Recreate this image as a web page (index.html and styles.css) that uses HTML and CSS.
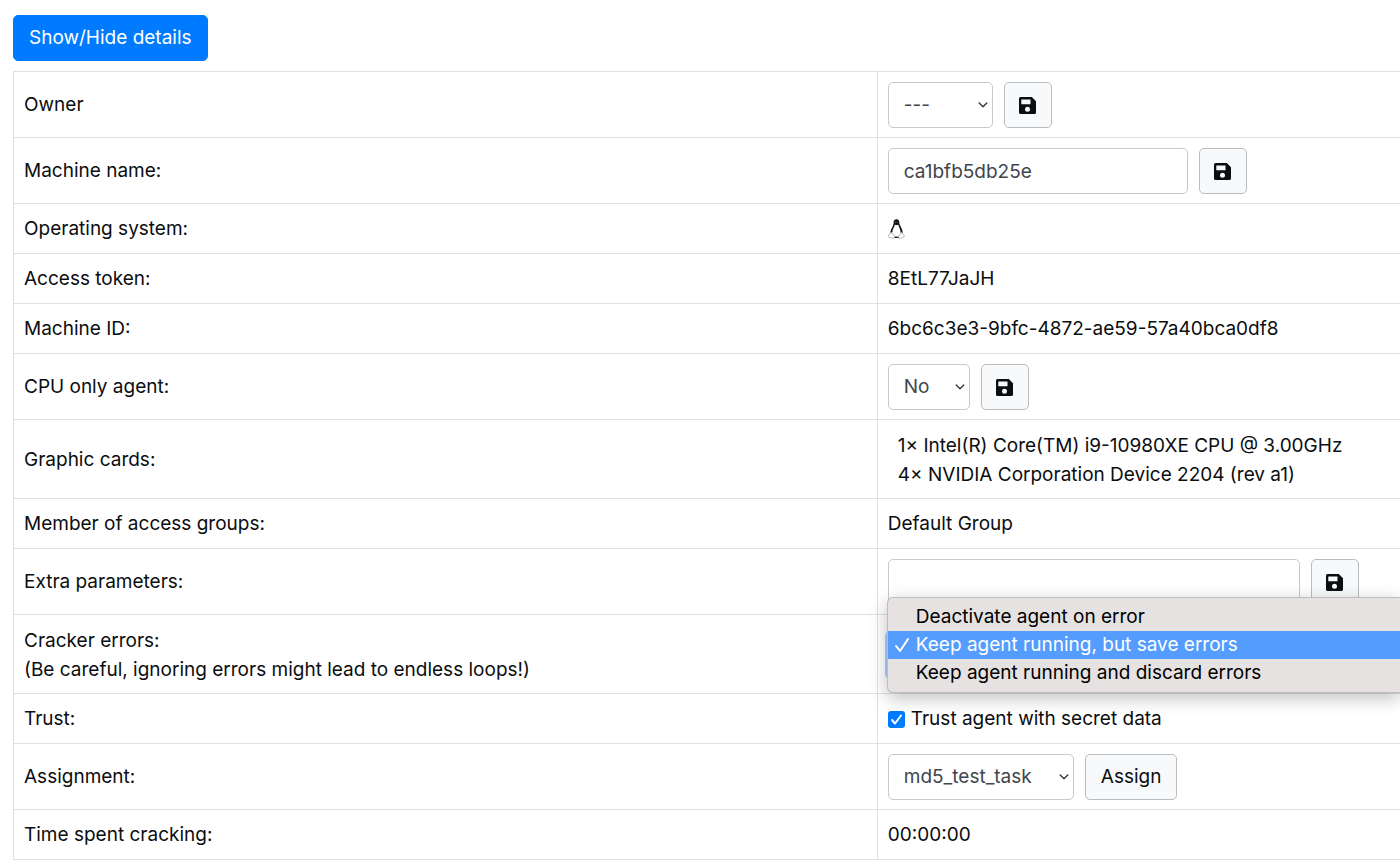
FILE: index.html
```html
<!DOCTYPE html>
<html lang="en">
<head>
<meta charset="utf-8">
<title>Agent details</title>
<link rel="stylesheet" href="styles.css">
</head>
<body>
<svg class="sprite" aria-hidden="true">
  <symbol id="save" viewBox="0 0 17 17">
    <path fill="currentColor" fill-rule="evenodd" d="M1.500 0H12.800L17 4.200V15.500Q17 17 15.500 17H1.500Q0 17 0 15.500V1.500Q0 0 1.500 0ZM2.300 2.600V7.200H11.500V2.600ZM8.500 9.800A2.500 2.500 0 1 0 8.500 14.800A2.500 2.500 0 1 0 8.500 9.800Z"/>
  </symbol>
  <symbol id="chevron" viewBox="0 0 10 6">
    <path fill="none" stroke="currentColor" stroke-width="1.4" stroke-linecap="round" stroke-linejoin="round" d="M1.200 1L5 4.800L8.800 1"/>
  </symbol>
</svg>
<main class="page">
  <button type="button" class="btn btn-primary">Show/Hide details</button>
  <table class="details">
    <colgroup><col class="col-name"><col></colgroup>
    <tbody>
      <tr>
        <td><label for="owner">Owner</label></td>
        <td><form class="controls">
          <span class="select select-owner"><select id="owner" class="field"><option>---</option></select><svg class="chevron"><use href="#chevron"/></svg></span>
          <button type="button" class="btn btn-save" aria-label="Save owner"><svg class="icon"><use href="#save"/></svg></button>
        </form></td>
      </tr>
      <tr>
        <td><label for="machine">Machine name:</label></td>
        <td><form class="controls">
          <input id="machine" class="field input-name" type="text" value="ca1bfb5db25e">
          <button type="button" class="btn btn-save" aria-label="Save machine name"><svg class="icon"><use href="#save"/></svg></button>
        </form></td>
      </tr>
      <tr>
        <td>Operating system:</td>
        <td><div class="os"><svg class="tux" viewBox="0 0 17 20" role="img" aria-label="Linux">
          <path fill="#fff" stroke="#333" stroke-width="0.8" d="M6 5C5.500 8 3 10 3 14L5 18H12L14 14C14 10 11.500 8 11 5Z"/>
          <path fill="#111" d="M5.600 4.500C5.300 1.500 6.700 0.300 8.500 0.300C10.500 0.300 11.600 1.700 11.400 4.800C11.500 7.300 14.900 9.300 14.500 14L12.500 13.500C13 10.500 10.700 8.500 10.200 5.500L8.500 6.200L6.900 5.500C6.500 8.300 4.200 10 4.300 13.500L2.600 14C2.400 10 5.800 7.800 5.600 4.500Z"/>
          <path fill="#fff" stroke="#999" stroke-width="0.7" d="M3.300 13.200L6.700 17.400C6.800 19.500 4.800 19.800 3.500 19L0.800 18.500C0.200 17.500 0.800 16.800 0.700 15.600C1.800 15.500 2.500 14.500 3.300 13.200ZM13.600 13.200L10.500 17.500C10.300 19.500 12.300 19.900 13.500 19L16 17.800C16.800 17 15.800 16.300 15.700 15.400C14.800 15.300 14.200 14.500 13.600 13.200Z"/>
          <path stroke="#222" d="M6.500 18.500H10.500"/>
          <path stroke="#ddd" stroke-width="0.7" d="M7.300 3.200H8M9.100 3.200H9.800"/>
        </svg></div></td>
      </tr>
      <tr><td>Access token:</td><td>8EtL77JaJH</td></tr>
      <tr><td>Machine ID:</td><td>6bc6c3e3-9bfc-4872-ae59-57a40bca0df8</td></tr>
      <tr>
        <td><label for="cpu">CPU only agent:</label></td>
        <td><form class="controls">
          <span class="select select-cpu"><select id="cpu" class="field"><option>No</option><option>Yes</option></select><svg class="chevron"><use href="#chevron"/></svg></span>
          <button type="button" class="btn btn-save" aria-label="Save CPU setting"><svg class="icon"><use href="#save"/></svg></button>
        </form></td>
      </tr>
      <tr>
        <td>Graphic cards:</td>
        <td><div class="lines cards">1× Intel(R) Core(TM) i9-10980XE CPU @ 3.00GHz<br>4× NVIDIA Corporation Device 2204 (rev a1)</div></td>
      </tr>
      <tr><td>Member of access groups:</td><td>Default Group</td></tr>
      <tr>
        <td><label for="extra">Extra parameters:</label></td>
        <td><form class="controls">
          <input id="extra" class="field input-extra" type="text">
          <button type="button" class="btn btn-save" aria-label="Save extra parameters"><svg class="icon"><use href="#save"/></svg></button>
        </form></td>
      </tr>
      <tr>
        <td><label class="lines" for="errors">Cracker errors:<br>(Be careful, ignoring errors might lead to endless loops!)</label></td>
        <td class="errors-cell">
          <div class="controls"><select id="errors" class="field select-errors"><option>Keep agent running, but save errors</option></select></div>
          <ul class="menu" role="listbox" aria-label="Cracker errors">
            <li class="menu-item" role="option">Deactivate agent on error</li>
            <li class="menu-item selected" role="option" aria-selected="true"><svg class="tick" viewBox="0 0 16 16"><path fill="none" stroke="currentColor" stroke-width="2" stroke-linecap="round" stroke-linejoin="round" d="M2 9L6 14L14 2"/></svg>Keep agent running, but save errors</li>
            <li class="menu-item" role="option">Keep agent running and discard errors</li>
          </ul>
        </td>
      </tr>
      <tr>
        <td>Trust:</td>
        <td><label class="trust"><input type="checkbox" class="check" checked><svg class="check-mark" viewBox="0 0 17 17"><path fill="none" stroke="currentColor" stroke-width="2" stroke-linecap="round" stroke-linejoin="round" d="M4 9L7 12.500L13 4.500"/></svg>Trust agent with secret data</label></td>
      </tr>
      <tr>
        <td><label for="task">Assignment:</label></td>
        <td><form class="controls">
          <span class="select select-task"><select id="task" class="field"><option>md5_test_task</option></select><svg class="chevron"><use href="#chevron"/></svg></span>
          <button type="button" class="btn">Assign</button>
        </form></td>
      </tr>
      <tr><td>Time spent cracking:</td><td>00:00:00</td></tr>
    </tbody>
  </table>
</main>
</body>
</html>
```

FILE: styles.css
```css
* { box-sizing: border-box; }

body {
  margin: 0;
  background: #fff;
  color: #0b0d0f;
  font-family: Inter, "Liberation Sans", sans-serif;
  font-size: 19px;
  line-height: 30px;
}

.sprite { display: none; }

.page {
  display: flex;
  flex-direction: column;
  align-items: flex-start;
  gap: 10px;
  padding: 15px 0 0 13px;
  overflow-x: hidden;
}

.btn {
  height: 46px;
  padding: 0 15px;
  border: 1px solid #b9bcbf;
  border-radius: 5px;
  background: #f8f9fa;
  color: #0b0d0f;
  font: inherit;
}

.btn-primary {
  border-color: #007bff;
  background: #007bff;
  color: #fff;
}

.btn-save {
  display: grid;
  place-items: center;
  width: 48px;
  padding: 0;
}

.icon {
  width: 17px;
  height: 17px;
}

.details {
  width: 100%;
  border-collapse: collapse;
  table-layout: fixed;
}

.col-name { width: 62.3%; }

.details td {
  padding: 10px 10px 9px;
  border: 1px solid #dee0e2;
  border-right: 0;
  vertical-align: middle;
  white-space: nowrap;
}

.lines {
  display: block;
  padding-top: 1px;
  line-height: 29px;
}

.controls {
  display: flex;
  gap: 11px;
  margin: 0;
}

.field {
  height: 46px;
  padding: 0 15px;
  border: 1px solid #c6cacd;
  border-radius: 5px;
  background: #fff;
  color: #3f464d;
  font: inherit;
  appearance: none;
}

.select {
  display: grid;
  align-items: center;
}

.select .field {
  grid-area: 1 / 1;
  width: 100%;
}

.chevron {
  grid-area: 1 / 1;
  justify-self: end;
  width: 10px;
  height: 6px;
  margin-right: 5px;
  color: #343a40;
  pointer-events: none;
}

.select-owner { width: 105px; }
.select-cpu { width: 82px; }
.select-task { width: 186px; }
.input-name { width: 300px; }
.input-extra { width: 412px; }

.os {
  display: flex;
  align-items: center;
  height: 30px;
}

.tux {
  width: 17px;
  height: 20px;
}

.cards { padding-left: 10px; }

.errors-cell { position: relative; }

.select-errors {
  width: 100%;
  border-color: #80bdff;
  box-shadow: 0 0 0 3px #a9d0fb;
}

.menu {
  position: absolute;
  top: -18px;
  left: 9px;
  right: 0;
  margin: 0;
  padding: 5px 0;
  border: 1px solid #bfbcbc;
  border-right: 0;
  border-radius: 6px 0 0 6px;
  background: #e6e2e2;
  box-shadow: 0 5px 18px rgba(0, 0, 0, 0.25);
  color: #000;
  line-height: 28px;
  list-style: none;
}

.menu-item {
  display: flex;
  align-items: center;
  padding-left: 28px;
}

.menu-item.selected {
  gap: 6px;
  padding-left: 6px;
  background: #549dff;
  color: #fff;
}

.tick {
  width: 16px;
  height: 16px;
}

.trust {
  display: grid;
  grid-template-columns: 17px auto;
  align-items: center;
  justify-content: start;
  column-gap: 6px;
}

.check {
  grid-area: 1 / 1;
  width: 17px;
  height: 17px;
  margin: 0;
  border-radius: 3px;
  background: #007aff;
  appearance: none;
}

.check-mark {
  grid-area: 1 / 1;
  width: 17px;
  height: 17px;
  color: #fff;
  pointer-events: none;
}
```
